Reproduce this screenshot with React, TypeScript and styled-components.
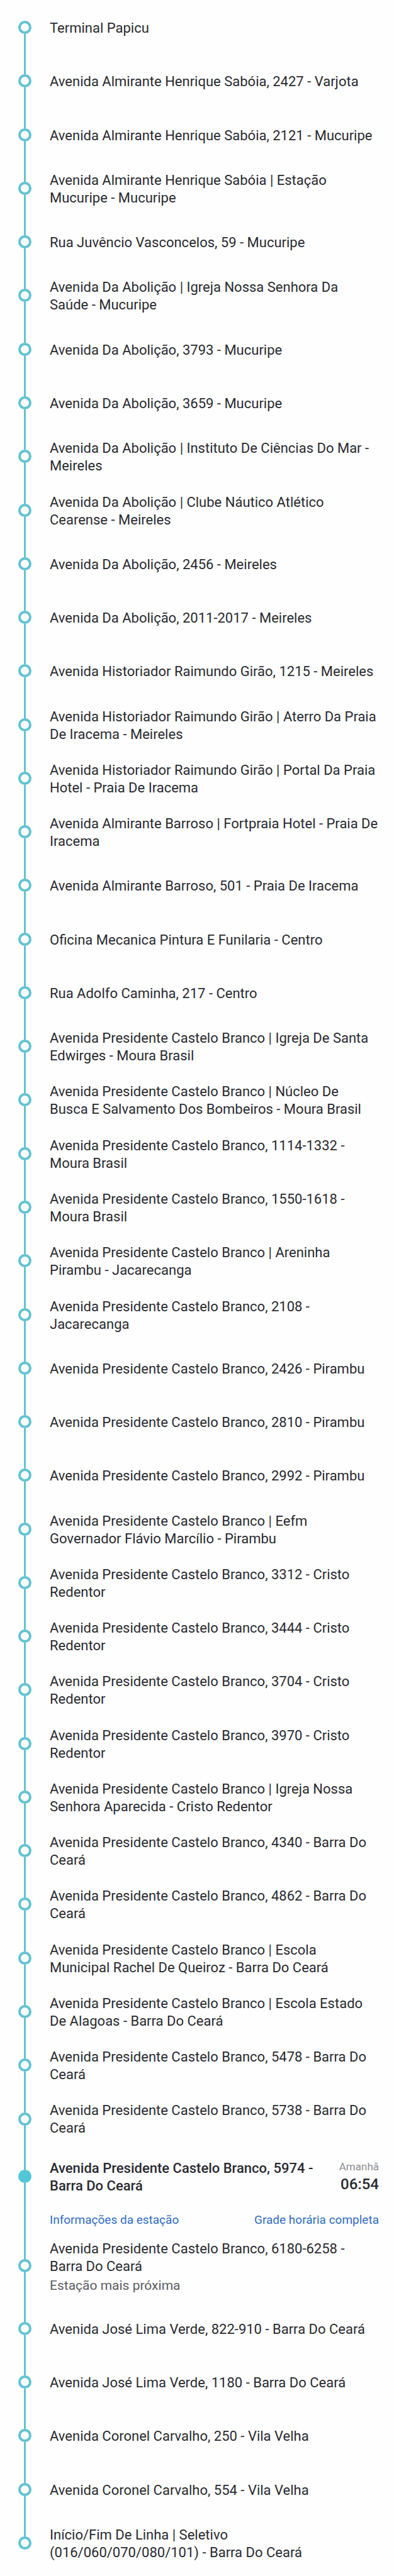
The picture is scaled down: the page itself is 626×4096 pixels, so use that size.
import React from "react";
import styled, { createGlobalStyle, css } from "styled-components";

const GlobalStyle = createGlobalStyle`
  *, *::before, *::after { box-sizing: border-box; }
  body {
    margin: 0;
    background: #fefefe;
    color: #292a30;
    font-family: Roboto, "Liberation Sans", sans-serif;
  }
`;

const StopList = styled.ol`
  display: flex;
  flex-direction: column;
  min-height: 100vh;
  margin: 0;
  padding: 1px 0 10px;
  list-style: none;
`;

const StopRow = styled.li<{ $fixed?: boolean }>`
  display: flex;
  flex: ${({ $fixed }) => ($fixed ? "0 0 auto" : "1 0 85px")};
  padding: 0 24px 0 29px;
`;

const Rail = styled.div`
  display: flex;
  flex: none;
  flex-direction: column;
  align-items: center;
  width: 21px;
  margin-right: 29px;
`;

const Segment = styled.span<{ $hidden?: boolean; $height?: number }>`
  flex: ${({ $height }) => ($height ? `0 0 ${$height}px` : "1")};
  width: 3px;
  background: ${({ $hidden }) => ($hidden ? "transparent" : "#62c3d1")};
`;

const Dot = styled.span<{ $active?: boolean }>`
  flex: none;
  width: 21px;
  height: 21px;
  border: 4px solid ${({ $active }) => ($active ? "#52c7d8" : "#62c3d1")};
  border-radius: 50%;
  background: ${({ $active }) => ($active ? "#52c7d8" : "#fefefe")};
`;

const StopBody = styled.div<{ $tall?: boolean }>`
  display: flex;
  flex: 1;
  flex-direction: column;
  justify-content: center;
  min-width: 0;
  ${({ $tall }) => $tall && css`padding: 14px 0;`}
`;

const StopName = styled.span<{ $strong?: boolean }>`
  padding-top: 3px;
  font-size: 22px;
  font-weight: ${({ $strong }) => ($strong ? 500 : 400)};
  line-height: 28px;
`;

const Note = styled.span`
  margin-top: 4px;
  color: #5b5c62;
  font-size: 21px;
  line-height: 24px;
`;

const ActiveMain = styled.div`
  display: flex;
  align-items: center;
  justify-content: space-between;
  gap: 40px;
  height: 98px;
`;

const Arrival = styled.div`
  display: flex;
  flex: none;
  flex-direction: column;
  align-items: flex-end;
`;

const Day = styled.span`
  color: #8d8e92;
  font-size: 17px;
  line-height: 24px;
`;

const Time = styled.time`
  font-size: 24px;
  font-weight: 500;
  line-height: 32px;
`;

const Links = styled.nav`
  display: flex;
  justify-content: space-between;
  height: 35px;
`;

const StopLink = styled.a`
  color: #2f6cc0;
  font-size: 19px;
  line-height: 40px;
  text-decoration: none;
`;

type Stop = { name: string; note?: string; day?: string; time?: string };

const stops: Stop[] = [
  { name: "Terminal Papicu" },
  { name: "Avenida Almirante Henrique Sabóia, 2427 - Varjota" },
  { name: "Avenida Almirante Henrique Sabóia, 2121 - Mucuripe" },
  { name: "Avenida Almirante Henrique Sabóia | Estação Mucuripe - Mucuripe" },
  { name: "Rua Juvêncio Vasconcelos, 59 - Mucuripe" },
  { name: "Avenida Da Abolição | Igreja Nossa Senhora Da Saúde - Mucuripe" },
  { name: "Avenida Da Abolição, 3793 - Mucuripe" },
  { name: "Avenida Da Abolição, 3659 - Mucuripe" },
  { name: "Avenida Da Abolição | Instituto De Ciências Do Mar - Meireles" },
  { name: "Avenida Da Abolição | Clube Náutico Atlético Cearense - Meireles" },
  { name: "Avenida Da Abolição, 2456 - Meireles" },
  { name: "Avenida Da Abolição, 2011-2017 - Meireles" },
  { name: "Avenida Historiador Raimundo Girão, 1215 - Meireles" },
  { name: "Avenida Historiador Raimundo Girão | Aterro Da Praia De Iracema - Meireles" },
  { name: "Avenida Historiador Raimundo Girão | Portal Da Praia Hotel - Praia De Iracema" },
  { name: "Avenida Almirante Barroso | Fortpraia Hotel - Praia De Iracema" },
  { name: "Avenida Almirante Barroso, 501 - Praia De Iracema" },
  { name: "Oficina Mecanica Pintura E Funilaria - Centro" },
  { name: "Rua Adolfo Caminha, 217 - Centro" },
  { name: "Avenida Presidente Castelo Branco | Igreja De Santa Edwirges - Moura Brasil" },
  { name: "Avenida Presidente Castelo Branco | Núcleo De Busca E Salvamento Dos Bombeiros - Moura Brasil" },
  { name: "Avenida Presidente Castelo Branco, 1114-1332 - Moura Brasil" },
  { name: "Avenida Presidente Castelo Branco, 1550-1618 - Moura Brasil" },
  { name: "Avenida Presidente Castelo Branco | Areninha Pirambu - Jacarecanga" },
  { name: "Avenida Presidente Castelo Branco, 2108 - Jacarecanga" },
  { name: "Avenida Presidente Castelo Branco, 2426 - Pirambu" },
  { name: "Avenida Presidente Castelo Branco, 2810 - Pirambu" },
  { name: "Avenida Presidente Castelo Branco, 2992 - Pirambu" },
  { name: "Avenida Presidente Castelo Branco | Eefm Governador Flávio Marcílio - Pirambu" },
  { name: "Avenida Presidente Castelo Branco, 3312 - Cristo Redentor" },
  { name: "Avenida Presidente Castelo Branco, 3444 - Cristo Redentor" },
  { name: "Avenida Presidente Castelo Branco, 3704 - Cristo Redentor" },
  { name: "Avenida Presidente Castelo Branco, 3970 - Cristo Redentor" },
  { name: "Avenida Presidente Castelo Branco | Igreja Nossa Senhora Aparecida - Cristo Redentor" },
  { name: "Avenida Presidente Castelo Branco, 4340 - Barra Do Ceará" },
  { name: "Avenida Presidente Castelo Branco, 4862 - Barra Do Ceará" },
  { name: "Avenida Presidente Castelo Branco | Escola Municipal Rachel De Queiroz - Barra Do Ceará" },
  { name: "Avenida Presidente Castelo Branco | Escola Estado De Alagoas - Barra Do Ceará" },
  { name: "Avenida Presidente Castelo Branco, 5478 - Barra Do Ceará" },
  { name: "Avenida Presidente Castelo Branco, 5738 - Barra Do Ceará" },
  { name: "Avenida Presidente Castelo Branco, 5974 - Barra Do Ceará", day: "Amanhã", time: "06:54" },
  { name: "Avenida Presidente Castelo Branco, 6180-6258 - Barra Do Ceará", note: "Estação mais próxima" },
  { name: "Avenida José Lima Verde, 822-910 - Barra Do Ceará" },
  { name: "Avenida José Lima Verde, 1180 - Barra Do Ceará" },
  { name: "Avenida Coronel Carvalho, 250 - Vila Velha" },
  { name: "Avenida Coronel Carvalho, 554 - Vila Velha" },
  { name: "Início/Fim De Linha | Seletivo (016/060/070/080/101) - Barra Do Ceará" },
];

function ActiveStop({ stop }: { stop: Stop }) {
  return (
    <StopRow $fixed aria-current="step">
      <Rail>
        <Segment $height={38} />
        <Dot $active />
        <Segment />
      </Rail>
      <StopBody>
        <ActiveMain>
          <StopName $strong>{stop.name}</StopName>
          <Arrival>
            <Day>{stop.day}</Day>
            <Time>{stop.time}</Time>
          </Arrival>
        </ActiveMain>
        <Links>
          <StopLink href="#estacao">Informações da estação</StopLink>
          <StopLink href="#horarios">Grade horária completa</StopLink>
        </Links>
      </StopBody>
    </StopRow>
  );
}

export default function App() {
  return (
    <main>
      <GlobalStyle />
      <StopList>
        {stops.map((stop, index) =>
          stop.time ? (
            <ActiveStop key={stop.name} stop={stop} />
          ) : (
            <StopRow key={stop.name} $fixed={Boolean(stop.note)}>
              <Rail>
                <Segment $hidden={index === 0} />
                <Dot />
                <Segment $hidden={index === stops.length - 1} />
              </Rail>
              <StopBody $tall={Boolean(stop.note)}>
                <StopName>{stop.name}</StopName>
                {stop.note && <Note>{stop.note}</Note>}
              </StopBody>
            </StopRow>
          )
        )}
      </StopList>
    </main>
  );
}
